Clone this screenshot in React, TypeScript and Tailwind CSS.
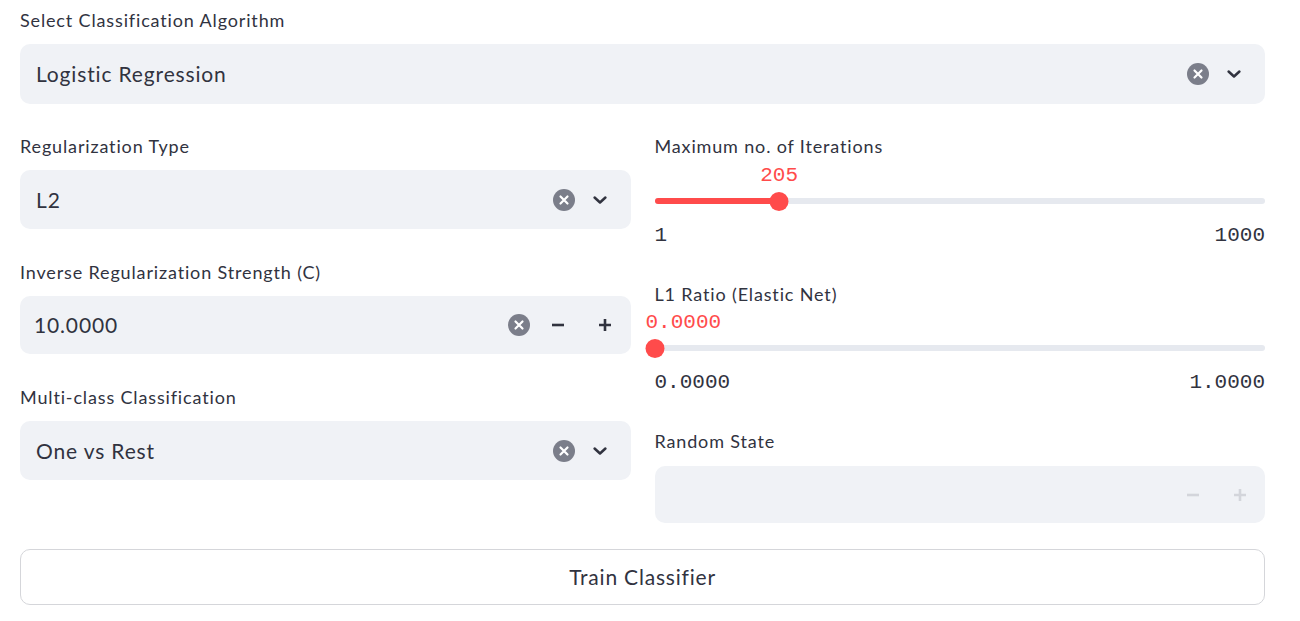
import React from 'react';

const SANS = { fontFamily: 'Lato, "Noto Sans", sans-serif' };

const ClearIcon: React.FC = () => (
  <svg width="22" height="22" viewBox="0 0 22 22">
    <circle cx="11" cy="11" r="11" fill="#7b7e8a" />
    <path d="M7.5 7.5 L14.5 14.5 M14.5 7.5 L7.5 14.5" stroke="#fff" strokeWidth="2.2" strokeLinecap="round" />
  </svg>
);

const Chevron: React.FC = () => (
  <svg width="20" height="20" viewBox="0 0 24 24" fill="none">
    <path d="M5.5 9 L12 15 L18.5 9" stroke="#31333f" strokeWidth="3" strokeLinecap="round" strokeLinejoin="round" />
  </svg>
);

const Minus: React.FC<{ color?: string }> = ({ color = '#31333f' }) => (
  <svg width="16" height="16" viewBox="0 0 16 16">
    <path d="M2 8 H14" stroke={color} strokeWidth="2.6" />
  </svg>
);

const Plus: React.FC<{ color?: string }> = ({ color = '#31333f' }) => (
  <svg width="16" height="16" viewBox="0 0 16 16">
    <path d="M2 8 H14 M8 2 V14" stroke={color} strokeWidth="2.6" />
  </svg>
);

const Label: React.FC<{ children: React.ReactNode; className?: string }> = ({ children, className = '' }) => (
  <div className={`h-[24px] flex items-center text-[18px] tracking-[0.85px] text-[#31333f] ${className}`}>{children}</div>
);

const SelectBox: React.FC<{ value: string; h?: string }> = ({ value, h = 'h-[59px]' }) => (
  <div className={`${h} rounded-[10px] bg-[#f0f2f6] flex items-center pl-[16px] pr-[19px]`}>
    <span className="flex-1 text-[21px] tracking-[0.85px] text-[#31333f]">{value}</span>
    <div className="flex items-center gap-[12px]">
      <span className="w-[24px] flex justify-center"><ClearIcon /></span>
      <span className="w-[24px] flex justify-center"><Chevron /></span>
    </div>
  </div>
);

interface SliderProps {
  pct: number;
  value: string;
  min: string;
  max: string;
  valueOffset: string;
}

const Slider: React.FC<SliderProps> = ({ pct, value, min, max, valueOffset }) => (
  <div className="relative">
    <div className="relative h-[24px]">
      <span
        className={`absolute top-0 h-[24px] flex items-center text-[21px] text-[#ff4b4b] font-['Liberation_Mono',monospace] ${valueOffset}`}
        style={{ left: `${pct}%` }}
      >
        {value}
      </span>
    </div>
    <div className="relative h-[20px] mt-[3px] flex items-center">
      <div className="w-full h-[6px] rounded-full bg-[#e6e9ef]" />
      <div className="absolute left-0 h-[6px] rounded-full bg-[#ff4b4b]" style={{ width: `${pct}%` }} />
      <div
        className="absolute w-[19px] h-[19px] rounded-full bg-[#ff4b4b] -translate-x-1/2"
        style={{ left: `${pct}%` }}
      />
    </div>
    <div className="mt-[13px] h-[24px] flex items-center justify-between text-[21px] text-[#31333f] font-['Liberation_Mono',monospace]">
      <span>{min}</span>
      <span>{max}</span>
    </div>
  </div>
);

export default function App() {
  return (
    <div className="bg-white min-h-[621px] pt-[8px]" style={SANS}>
      <div className="ml-[20px] w-[1245px]">
        <Label>Select Classification Algorithm</Label>
        <div className="mt-[12px]">
          <SelectBox value="Logistic Regression" h="h-[60px]" />
        </div>

        <div className="mt-[30px] grid grid-cols-2 gap-x-[24px]">
          {/* left column */}
          <div>
            <Label>Regularization Type</Label>
            <div className="mt-[12px]">
              <SelectBox value="L2" />
            </div>

            <Label className="mt-[31px]">Inverse Regularization Strength (C)</Label>
            <div className="mt-[12px] h-[58px] rounded-[10px] bg-[#f0f2f6] flex items-center pl-[14px] pr-[10px]">
              <span className="flex-1 text-[21px] tracking-[0.85px] text-[#31333f]">10.0000</span>
              <div className="flex items-center">
                <span className="w-[24px] flex justify-center mr-[11px]"><ClearIcon /></span>
                <span className="w-[32px] flex justify-center mr-[15px]"><Minus /></span>
                <span className="w-[32px] flex justify-center"><Plus /></span>
              </div>
            </div>

            <Label className="mt-[31px]">Multi-class Classification</Label>
            <div className="mt-[12px]">
              <SelectBox value="One vs Rest" />
            </div>
          </div>

          {/* right column */}
          <div>
            <Label>Maximum no. of Iterations</Label>
            <div className="mt-[6px]">
              <Slider pct={20.42} value="205" min="1" max="1000" valueOffset="-translate-x-1/2" />
            </div>

            <Label className="mt-[34px]">L1 Ratio (Elastic Net)</Label>
            <div className="mt-[5px]">
              <Slider pct={0} value="0.0000" min="0.0000" max="1.0000" valueOffset="-ml-[9px]" />
            </div>

            <Label className="mt-[34px]">Random State</Label>
            <div className="mt-[13px] h-[57px] rounded-[10px] bg-[#f0f2f6] flex items-center justify-end pr-[9px]">
              <span className="w-[32px] flex justify-center mr-[15px]"><Minus color="#d3d5db" /></span>
              <span className="w-[32px] flex justify-center"><Plus color="#d3d5db" /></span>
            </div>
          </div>
        </div>

        <button className="mt-[26px] w-full h-[56px] rounded-[10px] border border-[#d5d6da] bg-white text-[21px] tracking-[0.8px] text-[#31333f] flex items-center justify-center">
          Train Classifier
        </button>
      </div>
    </div>
  );
}
